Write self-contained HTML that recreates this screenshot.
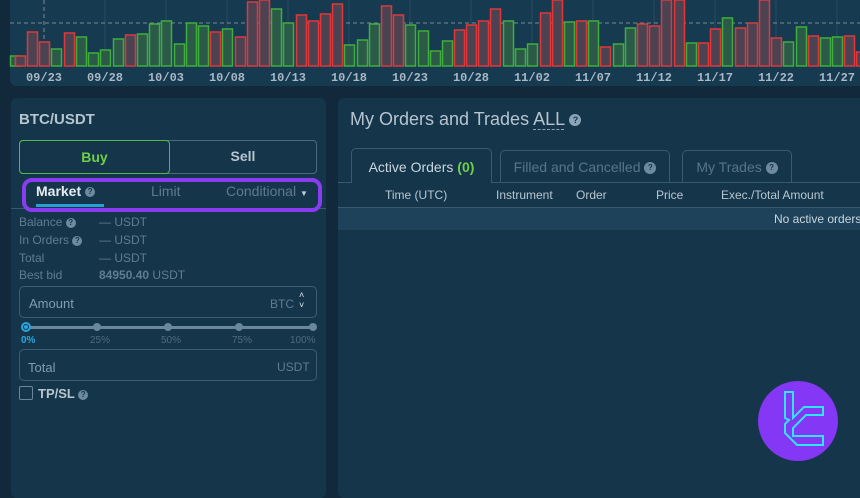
<!DOCTYPE html><html><head><meta charset="utf-8"><style>
*{box-sizing:border-box;margin:0;padding:0}
body{width:860px;height:479px;overflow:hidden;background:#11293a;font-family:"Liberation Sans",sans-serif;position:relative;color:#8aa4b8}
.abs{position:absolute}
.lp{left:11px;top:98px;width:315px;height:400px;background:#15364a;border-radius:6px}
.rp{left:338px;top:98px;width:540px;height:400px;background:#15364a;border-radius:6px}
.q{display:inline-block;width:10px;height:10px;border-radius:50%;background:#6d8aa0;color:#15364a;font-size:8px;font-weight:bold;text-align:center;line-height:10px;vertical-align:middle}
.lbl{font-size:12px;color:#5f7c92}
.inp{border:1px solid #3d5d73;border-radius:5px;height:32px}
</style></head><body>
<div class="abs" style="left:10px;top:0;width:860px;height:86px;background:#163a50;border-radius:0 0 6px 6px"></div>
<svg class="abs" style="left:0;top:0" width="860" height="90">
<g stroke="#2a4c62" stroke-width="1"><line x1="105" y1="0" x2="105" y2="66"/><line x1="166" y1="0" x2="166" y2="66"/><line x1="227" y1="0" x2="227" y2="66"/><line x1="288" y1="0" x2="288" y2="66"/><line x1="349" y1="0" x2="349" y2="66"/><line x1="410" y1="0" x2="410" y2="66"/><line x1="471" y1="0" x2="471" y2="66"/><line x1="532" y1="0" x2="532" y2="66"/><line x1="593" y1="0" x2="593" y2="66"/><line x1="654" y1="0" x2="654" y2="66"/><line x1="715" y1="0" x2="715" y2="66"/><line x1="776" y1="0" x2="776" y2="66"/><line x1="837" y1="0" x2="837" y2="66"/></g>
<line x1="10" y1="23" x2="860" y2="23" stroke="#7a8a96" stroke-dasharray="4,3"/>
<line x1="44" y1="0" x2="44" y2="66" stroke="#7a8a96" stroke-dasharray="4,3"/>
<g id="bars" stroke-width="1.5"></g>
<g fill="#aab8c4" font-family="Liberation Mono" font-size="12" font-weight="bold" text-anchor="middle">
<text x="44" y="81">09/23</text><text x="105" y="81">09/28</text><text x="166" y="81">10/03</text><text x="227" y="81">10/08</text><text x="288" y="81">10/13</text><text x="349" y="81">10/18</text><text x="410" y="81">10/23</text><text x="471" y="81">10/28</text><text x="532" y="81">11/02</text><text x="593" y="81">11/07</text><text x="654" y="81">11/12</text><text x="715" y="81">11/17</text><text x="776" y="81">11/22</text><text x="837" y="81">11/27</text></g>
</svg>
<script>
var d="g10:56 r15:56 r27:32 r39:42 g51:49 r64:33 g76:37 g88:53 g100:50 g113:39 r125:35 g137:34 g149:24 g161:21 g174:44 g186:23 g198:26 r210:32 g222:29 r235:37 r247:2 r259:0 g271:9 g283:23 r296:15 r308:21 r320:14 r332:4 g344:45 g357:40 g369:24 r381:6 r393:15 g405:25 g418:31 g430:51 g442:41 r454:30 r466:25 r478:21 r490:9 g503:21 g515:49 g527:44 r540:13 r552:0 g564:22 r576:21 g588:21 r600:47 g613:44 g625:28 r637:24 r649:26 r661:0 r674:0 g686:43 r698:43 r710:29 g722:18 r735:28 r747:23 r759:0 r771:38 g783:42 g796:27 r808:36 g820:38 g832:37 r844:36 r856:52".split(" ");
var s="";d.forEach(function(e){var c=e[0],p=e.slice(1).split(":"),x=+p[0],t=+p[1];s+='<rect x="'+(x+0.5)+'" y="'+t+'" width="10" height="'+(66-t)+'" fill="'+(c=="g"?"#2c5a48":"#4b4352")+'" stroke="'+(c=="g"?"#3fae3c":"#e0383a")+'"/>';});
document.getElementById("bars").innerHTML=s;
</script>
<div class="abs lp"></div>
<div class="abs rp"></div>
<div class="abs" style="left:19px;top:111px;font-size:15px;font-weight:bold;color:#b6c4cf">BTC/USDT</div>
<div class="abs" style="left:19px;top:140px;width:298px;height:34px;border:1px solid #4a6a80;border-radius:4px"></div>
<div class="abs" style="left:19px;top:140px;width:151px;height:34px;border:1.5px solid #4fb94a;border-radius:4px;color:#6fcf4a;font-weight:bold;font-size:14px;text-align:center;line-height:32px">Buy</div>
<div class="abs" style="left:170px;top:148px;width:146px;color:#b8c6d0;font-weight:bold;font-size:14px;text-align:center">Sell</div>
<div class="abs" style="left:11px;top:208px;width:315px;height:1px;background:#3a5a70"></div>
<div class="abs" style="left:36px;top:183px;font-size:14px;font-weight:bold;color:#e6edf2">Market <span class="q">?</span></div>
<div class="abs" style="left:36px;top:204px;width:68px;height:3px;background:#2a9fd6"></div>
<div class="abs" style="left:151px;top:183px;font-size:14px;color:#5d7a90">Limit</div>
<div class="abs" style="left:226px;top:183px;font-size:14px;color:#5d7a90">Conditional <span style="font-size:8px;color:#c0ccd6">▼</span></div>
<div class="abs" style="left:22px;top:178px;width:300px;height:34px;border:4px solid #8a3cf0;border-radius:10px"></div>
<div class="abs lbl" style="left:19px;top:215px">Balance <span class="q">?</span></div><div class="abs lbl" style="left:99px;top:215px">— USDT</div>
<div class="abs lbl" style="left:19px;top:233px">In Orders <span class="q">?</span></div><div class="abs lbl" style="left:99px;top:233px">— USDT</div>
<div class="abs lbl" style="left:19px;top:251px">Total</div><div class="abs lbl" style="left:99px;top:251px">— USDT</div>
<div class="abs lbl" style="left:19px;top:268px">Best bid</div><div class="abs lbl" style="left:99px;top:268px"><b>84950.40</b> USDT</div>
<div class="abs inp" style="left:19px;top:286px;width:298px"></div>
<div class="abs" style="left:29px;top:296px;font-size:13px;color:#7f9cb2">Amount</div>
<div class="abs" style="left:270px;top:297px;font-size:12px;color:#5f7c92">BTC</div>
<div class="abs" style="left:299px;top:290px;font-size:9px;color:#dfe7ee;line-height:10px">˄<br>˅</div>
<div class="abs" style="left:26px;top:326px;width:288px;height:3px;background:#6a879c"></div>
<div class="abs" style="left:21px;top:322px;width:10px;height:10px;border:2px solid #2aa6e0;border-radius:50%;background:#15364a"></div>
<div class="abs" style="left:24px;top:325px;width:4px;height:4px;border-radius:50%;background:#2aa6e0"></div>
<div class="abs" style="left:93px;top:323px;width:8px;height:8px;border-radius:50%;background:#6a879c"></div>
<div class="abs" style="left:164px;top:323px;width:8px;height:8px;border-radius:50%;background:#6a879c"></div>
<div class="abs" style="left:235px;top:323px;width:8px;height:8px;border-radius:50%;background:#6a879c"></div>
<div class="abs" style="left:309px;top:323px;width:8px;height:8px;border-radius:50%;background:#6a879c"></div>
<div class="abs" style="top:335px;font-size:10px;color:#4e6b80;left:0;width:330px">
<span class="abs" style="left:21px;color:#2aa6e0;font-weight:bold">0%</span><span class="abs" style="left:90px">25%</span><span class="abs" style="left:161px">50%</span><span class="abs" style="left:232px">75%</span><span class="abs" style="left:290px">100%</span></div>
<div class="abs inp" style="left:19px;top:349px;width:298px"></div>
<div class="abs" style="left:28px;top:360px;font-size:13px;color:#7f9cb2">Total</div>
<div class="abs" style="left:277px;top:360px;font-size:12px;color:#5f7c92">USDT</div>
<div class="abs" style="left:19px;top:386px;width:14px;height:14px;border:1px solid #6a879c;border-radius:2px"></div>
<div class="abs" style="left:38px;top:386px;font-size:13px;font-weight:bold;color:#b8c6d0">TP/SL <span class="q">?</span></div>
<div class="abs" style="left:350px;top:109px;font-size:18px;color:#b6c4cf">My Orders and Trades <span style="border-bottom:1px dashed #8aa4b8">ALL</span> <span class="q" style="width:12px;height:12px;line-height:12px;font-size:9px;background:#8aa4b8">?</span></div>
<div class="abs" style="left:338px;top:182px;width:522px;height:1px;background:#3a5a70"></div>
<div class="abs" style="left:351px;top:148px;width:141px;height:35px;border:1px solid #3a5a70;border-bottom:none;border-radius:5px 5px 0 0;background:#15364a;font-size:14px;color:#c9d5de;text-align:center;line-height:36px">Active Orders <b style="color:#6fcf4a">(0)</b></div>
<div class="abs" style="left:500px;top:150px;width:170px;height:33px;border:1px solid #3a5a70;border-bottom:none;border-radius:5px 5px 0 0;font-size:14px;color:#56758a;text-align:center;line-height:33px">Filled and Cancelled <span class="q" style="width:12px;height:12px;line-height:12px;background:#6d8aa0">?</span></div>
<div class="abs" style="left:682px;top:150px;width:110px;height:33px;border:1px solid #3a5a70;border-bottom:none;border-radius:5px 5px 0 0;font-size:14px;color:#56758a;text-align:center;line-height:33px">My Trades <span class="q" style="width:12px;height:12px;line-height:12px;background:#6d8aa0">?</span></div>
<div class="abs" style="top:188px;left:0;font-size:12px;color:#b8c6d0;width:860px">
<span class="abs" style="left:385px">Time (UTC)</span><span class="abs" style="left:496px">Instrument</span><span class="abs" style="left:576px">Order</span><span class="abs" style="left:656px">Price</span><span class="abs" style="left:721px">Exec./Total Amount</span></div>
<div class="abs" style="left:338px;top:207px;width:522px;height:23px;background:#1d4259;border-top:1px solid #3a5a70"></div>
<div class="abs" style="left:774px;top:212px;font-size:12px;color:#c9d5de;white-space:nowrap">No active orders</div>
<svg class="abs" style="left:758px;top:381px" width="80" height="80"><circle cx="40" cy="40" r="40" fill="#8437f5"/>
<path d="M27 11H35V37L46 26H65V34H48L35 47V55H65V64H39L27 52V43L31 39L27 37Z" fill="none" stroke="#2ee6f6" stroke-width="2"/></svg>
</body></html>
